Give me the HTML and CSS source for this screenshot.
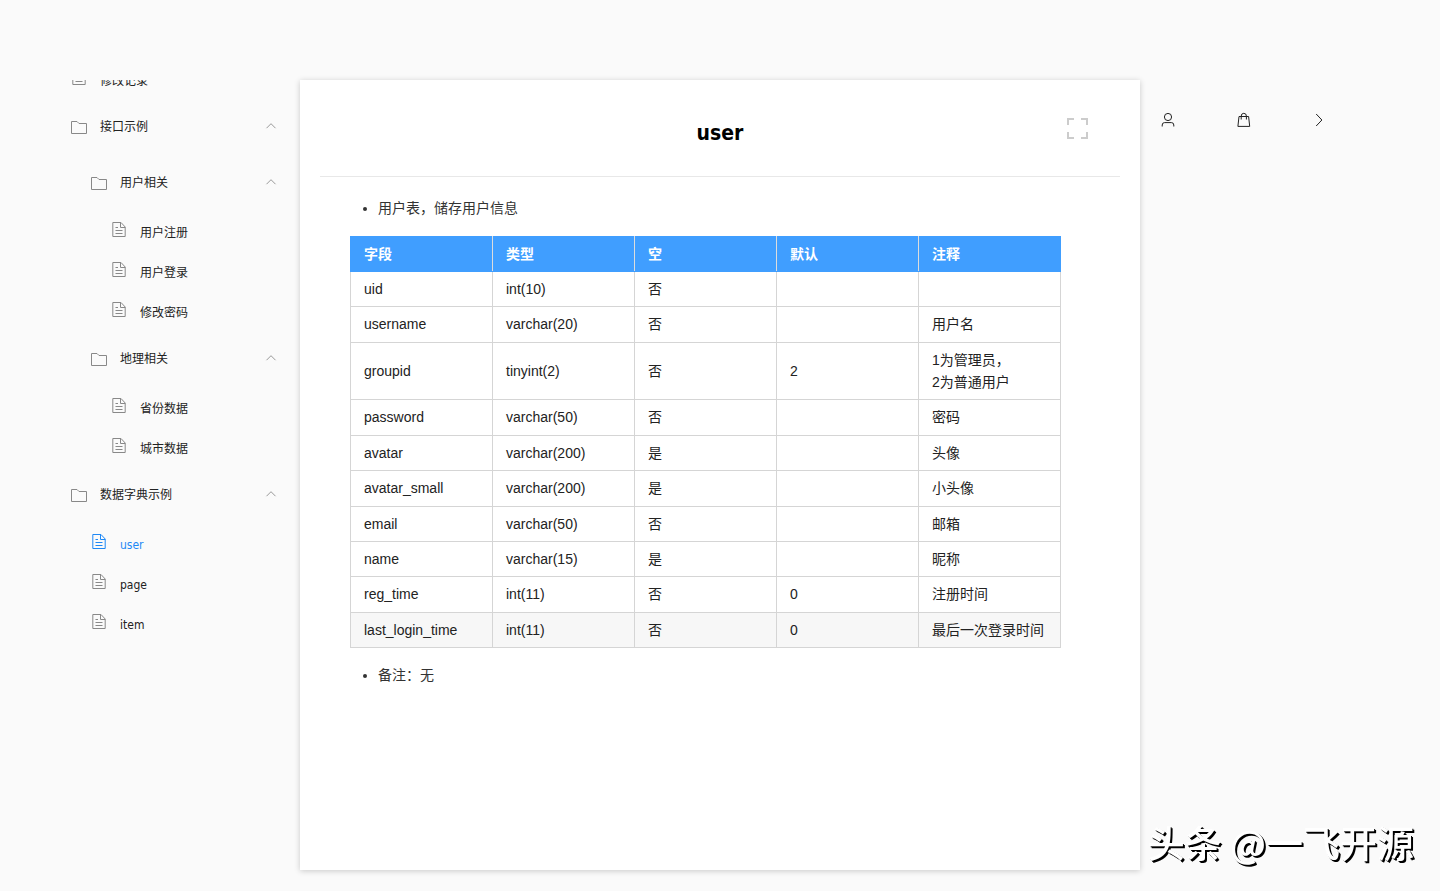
FILE: index.html
```html
<!DOCTYPE html>
<html lang="zh-CN">
<head>
<meta charset="utf-8">
<title>user</title>
<meta name="viewport" content="width=device-width, initial-scale=1">
<link rel="stylesheet" href="styles.css">
</head>
<body>
<svg class="sprite" aria-hidden="true">
  <symbol id="folder" viewBox="0 0 18 16"><path d="M1.5 2.5H7L9 4.5H16.5V14.5H1.5Z"/></symbol>
  <symbol id="file" viewBox="0 0 18 16"><path d="M2.8 .5H11L15.2 5V14.5H2.8ZM10.5 .5V5.5H15.2M5.5 5.5H8M5.5 8.5H12.5M5.5 11.5H12.5"/></symbol>
  <symbol id="up" viewBox="0 0 12 12"><path d="M1.5 8.2L6 3.7L10.5 8.2"/></symbol>
</svg>
<div class="page">
  <nav class="sidebar" aria-label="目录">
    <ul class="menu">
      <li><a class="item" href="#"><svg class="icon file"><use href="#file"/></svg><span>修改记录</span></a></li>
      <li>
        <button class="group" type="button" aria-expanded="true"><svg class="icon"><use href="#folder"/></svg><span>接口示例</span><svg class="arrow"><use href="#up"/></svg></button>
        <ul class="submenu">
          <li>
            <button class="group" type="button" aria-expanded="true"><svg class="icon"><use href="#folder"/></svg><span>用户相关</span><svg class="arrow"><use href="#up"/></svg></button>
            <ul class="submenu">
              <li><a class="item" href="#"><svg class="icon file"><use href="#file"/></svg><span>用户注册</span></a></li>
              <li><a class="item" href="#"><svg class="icon file"><use href="#file"/></svg><span>用户登录</span></a></li>
              <li><a class="item" href="#"><svg class="icon file"><use href="#file"/></svg><span>修改密码</span></a></li>
            </ul>
          </li>
          <li>
            <button class="group" type="button" aria-expanded="true"><svg class="icon"><use href="#folder"/></svg><span>地理相关</span><svg class="arrow"><use href="#up"/></svg></button>
            <ul class="submenu">
              <li><a class="item" href="#"><svg class="icon file"><use href="#file"/></svg><span>省份数据</span></a></li>
              <li><a class="item" href="#"><svg class="icon file"><use href="#file"/></svg><span>城市数据</span></a></li>
            </ul>
          </li>
        </ul>
      </li>
      <li>
        <button class="group" type="button" aria-expanded="true"><svg class="icon"><use href="#folder"/></svg><span>数据字典示例</span><svg class="arrow"><use href="#up"/></svg></button>
        <ul class="submenu">
          <li><a class="item active" href="#" aria-current="page"><svg class="icon file"><use href="#file"/></svg><span>user</span></a></li>
          <li><a class="item" href="#"><svg class="icon file"><use href="#file"/></svg><span>page</span></a></li>
          <li><a class="item" href="#"><svg class="icon file"><use href="#file"/></svg><span>item</span></a></li>
        </ul>
      </li>
    </ul>
  </nav>

  <main class="doc">
    <header class="doc-head">
      <h1>user</h1>
      <button class="fullscreen" type="button" aria-label="全屏"><svg viewBox="0 0 22 22"><path d="M2 8V2H8M15 2H21V8M21 15V21H15M8 21H2V15"/></svg></button>
    </header>
    <div class="content">
      <ul class="notes"><li>用户表，储存用户信息</li></ul>
      <table class="fields">
        <thead><tr><th>字段</th><th>类型</th><th>空</th><th>默认</th><th>注释</th></tr></thead>
        <tbody>
          <tr><td>uid</td><td>int(10)</td><td>否</td><td></td><td></td></tr>
          <tr><td>username</td><td>varchar(20)</td><td>否</td><td></td><td>用户名</td></tr>
          <tr><td>groupid</td><td>tinyint(2)</td><td>否</td><td>2</td><td>1为管理员，<br>2为普通用户</td></tr>
          <tr><td>password</td><td>varchar(50)</td><td>否</td><td></td><td>密码</td></tr>
          <tr><td>avatar</td><td>varchar(200)</td><td>是</td><td></td><td>头像</td></tr>
          <tr><td>avatar_small</td><td>varchar(200)</td><td>是</td><td></td><td>小头像</td></tr>
          <tr><td>email</td><td>varchar(50)</td><td>否</td><td></td><td>邮箱</td></tr>
          <tr><td>name</td><td>varchar(15)</td><td>是</td><td></td><td>昵称</td></tr>
          <tr><td>reg_time</td><td>int(11)</td><td>否</td><td>0</td><td>注册时间</td></tr>
          <tr class="hover"><td>last_login_time</td><td>int(11)</td><td>否</td><td>0</td><td>最后一次登录时间</td></tr>
        </tbody>
      </table>
      <ul class="notes"><li>备注：无</li></ul>
    </div>
  </main>

  <aside class="tools">
    <button type="button" aria-label="用户"><svg viewBox="0 0 16 16"><circle cx="8" cy="5" r="3.6"/><path d="M2.2 14.5V13Q2.2 10.6 4.6 10.6H11.4Q13.8 10.6 13.8 13V14.5"/></svg></button>
    <button type="button" aria-label="项目"><svg viewBox="0 0 16 16"><path d="M3 4.5H12.6L13.7 14.4H1.9ZM5.2 7.5V4.2A2.6 2.9 0 0 1 10.4 4.2V7.5"/></svg></button>
    <button type="button" aria-label="更多"><svg viewBox="0 0 16 16"><path d="M4.2 2L9.9 8L4.2 14"/></svg></button>
  </aside>
</div>
<div class="watermark">头条 @一飞开源</div>
</body>
</html>
```
FILE: styles.css
```css
* { box-sizing: border-box; }
body {
  margin: 0;
  background: #fafafa;
  color: #222;
  font: 14px/1.6 "Liberation Sans", "Noto Sans CJK SC", sans-serif;
}
ul { margin: 0; padding: 0; list-style: none; }
button { border: 0; padding: 0; background: none; color: inherit; font: inherit; cursor: pointer; }
svg { display: block; fill: none; stroke: currentColor; }
.sprite { position: absolute; width: 0; height: 0; }

.page {
  display: grid;
  grid-template-columns: 240px minmax(0, 840px) 1fr;
  padding: 80px 60px 21px;
  min-height: 100vh;
}

.sidebar {
  overflow: hidden;
  font: 12px/20px "DejaVu Sans Condensed", "Noto Sans CJK SC", sans-serif;
}
.menu { margin-top: -21px; }
.group, .item {
  display: flex;
  align-items: center;
  gap: 12px;
  width: 100%;
  padding: 0 23px 0 10px;
  color: #222;
  text-align: left;
  text-decoration: none;
}
.group { height: 56px; }
.item { height: 40px; padding-top: 4px; }
.submenu .group, .submenu .item { padding-left: 30px; }
.submenu .submenu .item { padding-left: 50px; }
.icon { width: 18px; height: 16px; color: #888; }
.file { margin-bottom: 6px; }
.item.active, .item.active .icon { color: #1e88f5; }
.arrow { width: 12px; height: 12px; margin: 0 0 2px auto; color: #999; }

.doc {
  padding: 0 20px 20px;
  background: #fff;
  box-shadow: 0 1px 6px rgba(0, 0, 0, .2);
}
.doc-head {
  display: grid;
  grid-template-columns: 1fr auto 1fr;
  align-items: center;
  height: 97px;
  padding: 0 32px;
  border-bottom: 1px solid #e8e8e8;
}
.doc-head h1 {
  grid-column: 2;
  margin: 10px 0 0;
  color: #000;
  font: bold 21px/30px "DejaVu Sans Condensed", "Noto Sans", sans-serif;
}
.fullscreen { justify-self: end; color: #ccc; }
.fullscreen svg { width: 22px; height: 22px; stroke-width: 2; }
.content { padding: 20px 30px; color: #333; }
.notes { padding-left: 28px; list-style: disc; }
.fields {
  width: 711px;
  max-width: 100%;
  margin: 17px 0 16px;
  border-collapse: collapse;
  table-layout: fixed;
  color: #222;
}
.fields th, .fields td {
  padding: 6px 13px;
  border: 1px solid #d5d5d5;
  text-align: left;
}
.fields th { padding-bottom: 5px; border-color: #409eff #ddd; background: #409eff; color: #fff; }
.fields th:first-child { border-left-color: #409eff; }
.fields th:last-child { border-right-color: #409eff; }
.fields .hover { background: #f7f7f7; }

.tools { display: flex; align-items: flex-start; gap: 60px; padding: 32px 20px; color: #222; }
.tools svg { width: 16px; height: 16px; }

.watermark {
  position: fixed;
  right: 26px;
  bottom: 23px;
  color: #fff;
  font: 500 37px/52px "Noto Sans CJK SC", sans-serif;
  text-shadow: 1px 1px 0 #000, 2px 2px 0 #000;
}
```
